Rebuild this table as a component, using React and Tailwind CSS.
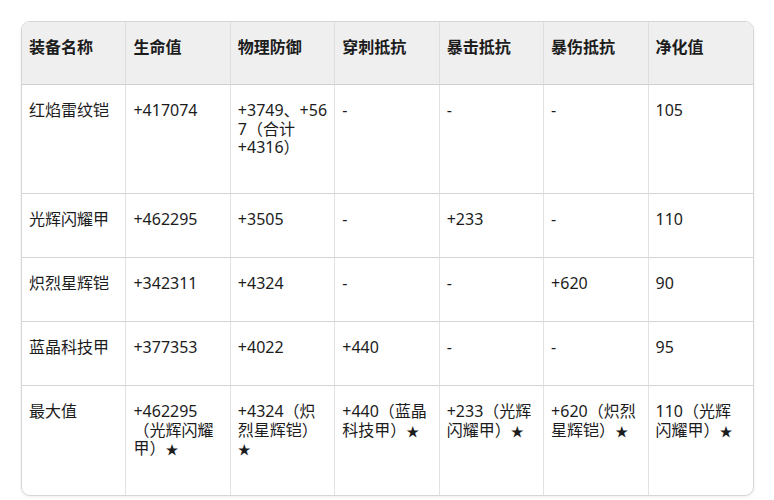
import React from "react";

const headers = ["装备名称", "生命值", "物理防御", "穿刺抵抗", "暴击抵抗", "暴伤抵抗", "净化值"];

const Star = () => <span className="text-[13px]">★</span>;

const rows = [
  {
    h: "h-[109px]",
    cells: [
      "红焰雷纹铠",
      "+417074",
      <>
        +3749、+567（合计<span className="whitespace-nowrap">+4316）</span>
      </>,
      "-",
      "-",
      "-",
      "105",
    ],
  },
  { h: "h-[64px]", cells: ["光辉闪耀甲", "+462295", "+3505", "-", "+233", "-", "110"] },
  { h: "h-[64px]", cells: ["炽烈星辉铠", "+342311", "+4324", "-", "-", "+620", "90"] },
  { h: "h-[64px]", cells: ["蓝晶科技甲", "+377353", "+4022", "+440", "-", "-", "95"] },
  {
    h: "h-[109px]",
    cells: [
      "最大值",
      <>+462295（光辉闪耀甲）<Star /></>,
      <>+4324（炽烈星辉铠）<Star /></>,
      <>+440（蓝晶科技甲）<Star /></>,
      <>+233（光辉闪耀甲）<Star /></>,
      <>+620（炽烈星辉铠）<Star /></>,
      <>110（光辉闪耀甲）<Star /></>,
    ],
  },
];

export default function App() {
  return (
    <div
      className="w-[774px] h-[500px] bg-white pt-[21px] pl-[21px]"
      style={{ fontFamily: '"Noto Sans", "Noto Sans CJK SC", sans-serif' }}
    >
      <div className="w-[733px] rounded-[9px] border border-[#d6d6d6] overflow-hidden shadow-[0_1px_3px_rgba(0,0,0,0.08)]">
        <table className="w-full table-fixed border-separate border-spacing-0 text-[16px] leading-[18.5px] text-[#1c1c1c]">
          <thead>
            <tr className="h-[63px] bg-[#efefef]">
              {headers.map((t, i) => (
                <th
                  key={i}
                  className={`align-top text-left font-bold pt-[16px] pl-[7px] pr-[7px] border-b border-[#cfcfcf] ${
                    i < 6 ? "border-r border-r-[#dedede]" : ""
                  }`}
                >
                  {t}
                </th>
              ))}
            </tr>
          </thead>
          <tbody>
            {rows.map((r, ri) => (
              <tr key={ri} className={r.h}>
                {r.cells.map((c, ci) => (
                  <td
                    key={ci}
                    className={`align-top pt-[16px] pl-[7px] pr-[7px] break-all ${
                      ri < rows.length - 1 ? "border-b border-[#d4d4d4]" : ""
                    } ${ci < 6 ? "border-r border-r-[#e2e2e2]" : ""}`}
                  >
                    {c}
                  </td>
                ))}
              </tr>
            ))}
          </tbody>
        </table>
      </div>
    </div>
  );
}
